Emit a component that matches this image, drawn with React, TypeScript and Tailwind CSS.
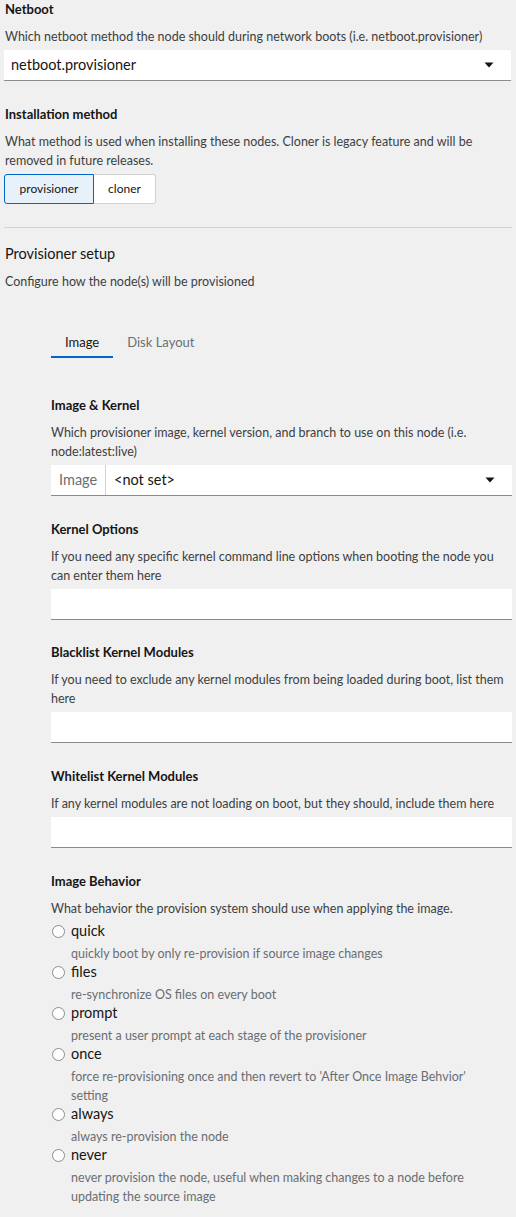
import React from 'react';

const font = { fontFamily: 'Lato, "Liberation Sans", sans-serif' };

const Caret = () => (
  <svg width="10" height="6" viewBox="0 0 10 6" className="shrink-0">
    <path d="M0.5 0.5 H9.5 L5 5.5 Z" fill="#151515" />
  </svg>
);

const Label: React.FC<{ children: React.ReactNode; className?: string }> = ({ children, className = '' }) => (
  <div className={`text-[13px] font-bold leading-[18px] text-[#151515] ${className}`}>{children}</div>
);

const Help: React.FC<{ children: React.ReactNode }> = ({ children }) => (
  <div className="mt-[9px] text-[12.5px] leading-[19px] text-[#3c3f42]">{children}</div>
);

const TextInput = () => (
  <div className="mt-[4px] h-[31px] bg-white border-b border-[#8a8d90]" />
);

interface Behavior {
  name: string;
  text: string;
}

const behaviors: Behavior[] = [
  { name: 'quick', text: 'quickly boot by only re-provision if source image changes' },
  { name: 'files', text: 're-synchronize OS files on every boot' },
  { name: 'prompt', text: 'present a user prompt at each stage of the provisioner' },
  { name: 'once', text: "force re-provisioning once and then revert to 'After Once Image Behvior' setting" },
  { name: 'always', text: 'always re-provision the node' },
  { name: 'never', text: 'never provision the node, useful when making changes to a node before updating the source image' },
];

export default function App() {
  return (
    <div className="min-h-screen w-[516px] bg-[#f0f0f0] px-[4px] pb-6" style={font}>
      {/* Netboot */}
      <Label className="pl-[1px]">Netboot</Label>
      <Help>
        <span className="pl-[1px]">Which netboot method the node should during network boots (i.e. netboot.provisioner)</span>
      </Help>
      <div className="mt-[4px] h-[31px] mr-[1px] bg-white border-b border-[#8a8d90] flex items-center justify-between pl-[7px] pr-[17px]">
        <span className="text-[14.5px] text-[#151515]">netboot.provisioner</span>
        <Caret />
      </div>

      {/* Installation method */}
      <Label className="mt-[24px] pl-[1px]">Installation method</Label>
      <Help>
        <div className="pl-[1px]">
          What method is used when installing these nodes. Cloner is legacy feature and will be removed in future releases.
        </div>
      </Help>
      <div className="mt-[4px] flex">
        <button className="h-[30px] w-[90px] rounded-l-[3px] border border-[#0066cc] bg-[#e7f1fa] text-[12px] text-[#151515]">
          provisioner
        </button>
        <button className="h-[30px] w-[62px] rounded-r-[3px] border border-l-0 border-[#d2d2d2] bg-white text-[12px] text-[#151515]">
          cloner
        </button>
      </div>

      <div className="mt-[23px] h-px bg-[#d2d2d2]" />

      {/* Provisioner setup */}
      <div className="mt-[16px] pl-[1px] text-[14.5px] leading-[20px] text-[#151515]">Provisioner setup</div>
      <div className="mt-[8px] pl-[1px] text-[12.5px] leading-[19px] text-[#3c3f42]">Configure how the node(s) will be provisioned</div>

      <div className="ml-[47px]">
        <div className="mt-[33px] flex">
          <div className="px-[14px] pt-[8px] pb-[4px] border-b-[2px] border-[#0066cc] text-[13px] leading-[20px] text-[#151515]">
            Image
          </div>
          <div className="px-[14px] pt-[8px] pb-[4px] border-b-[2px] border-transparent text-[13px] leading-[20px] text-[#6a6e73]">
            Disk Layout
          </div>
        </div>

        {/* Image & Kernel */}
        <Label className="mt-[38px]">Image &amp; Kernel</Label>
        <Help>Which provisioner image, kernel version, and branch to use on this node (i.e. node:latest:live)</Help>
        <div className="mt-[4px] h-[31px] flex bg-white border-b border-[#8a8d90]">
          <div className="w-[55px] flex items-center pl-[8px] border-r border-[#d2d2d2] text-[14.5px] text-[#6a6e73]">
            Image
          </div>
          <div className="flex-1 flex items-center justify-between pl-[8px] pr-[17px]">
            <span className="text-[14.5px] text-[#151515]">&lt;not set&gt;</span>
            <Caret />
          </div>
        </div>

        <Label className="mt-[24px]">Kernel Options</Label>
        <Help>If you need any specific kernel command line options when booting the node you can enter them here</Help>
        <TextInput />

        <Label className="mt-[23px]">Blacklist Kernel Modules</Label>
        <Help>If you need to exclude any kernel modules from being loaded during boot, list them here</Help>
        <TextInput />

        <Label className="mt-[24px]">Whitelist Kernel Modules</Label>
        <Help>If any kernel modules are not loading on boot, but they should, include them here</Help>
        <TextInput />

        <Label className="mt-[24px]">Image Behavior</Label>
        <Help>What behavior the provision system should use when applying the image.</Help>
        <div className="mt-[4px]">
          {behaviors.map((b) => (
            <div key={b.name}>
              <div className="flex items-center h-[18px]">
                <span className="ml-[1px] h-[13px] w-[13px] rounded-full border border-[#8a8d90] bg-white" />
                <span className="ml-[6px] text-[14.5px] leading-[18px] text-[#151515]">{b.name}</span>
              </div>
              <div className="mt-[4px] pl-[20px] pr-[12px] text-[12.5px] leading-[19px] text-[#6a6e73]">{b.text}</div>
            </div>
          ))}
        </div>
      </div>
    </div>
  );
}
